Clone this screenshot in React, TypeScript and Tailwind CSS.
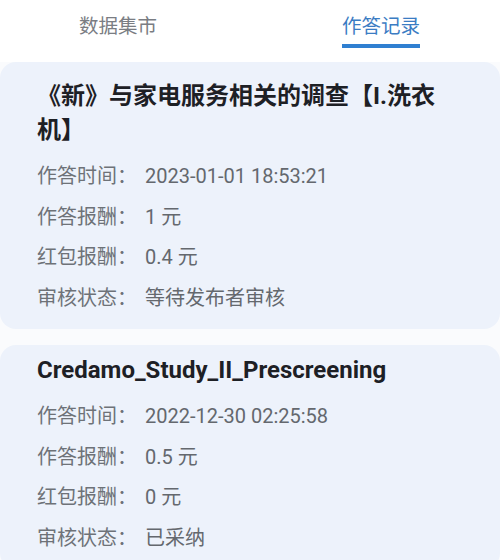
import React from 'react'

type Record = {
  title: string
  pad: string
  rows: [string, string][]
}

const records: Record[] = [
  {
    title: '《新》与家电服务相关的调查【I.洗衣机】',
    pad: 'pt-[17px]',
    rows: [
      ['作答时间：', '2023-01-01 18:53:21'],
      ['作答报酬：', '1 元'],
      ['红包报酬：', '0.4 元'],
      ['审核状态：', '等待发布者审核'],
    ],
  },
  {
    title: 'Credamo_Study_II_Prescreening',
    pad: 'pt-[8px]',
    rows: [
      ['作答时间：', '2022-12-30 02:25:58'],
      ['作答报酬：', '0.5 元'],
      ['红包报酬：', '0 元'],
      ['审核状态：', '已采纳'],
    ],
  },
]

const font = { fontFamily: 'Roboto, "Noto Sans CJK SC", sans-serif' }

const RecordCard = ({ record }: { record: Record }) => (
  <div className={`rounded-2xl bg-[#edf2fb] pl-[37px] pr-[40px] pb-[11px] ${record.pad}`}>
    <h2 className="text-[24px] font-bold leading-[34px] text-[#1d2025]">{record.title}</h2>
    <div className="mt-[9px] flex flex-col">
      {record.rows.map(([label, value]) => (
        <div key={label} className="flex h-[40.5px] items-center text-[20px] text-[#6e7278]">
          <span className="w-[108px] shrink-0">{label}</span>
          <span className="text-[#64686e]">{value}</span>
        </div>
      ))}
    </div>
  </div>
)

export default function App() {
  return (
    <div className="min-h-[560px] w-[500px] overflow-hidden bg-[#fafbfd]" style={font}>
      <div className="flex h-[62px] bg-white">
        <div className="pl-[79px] pt-[13px]">
          <span className="text-[19.5px] leading-[28px] text-[#7a7d83]">数据集市</span>
        </div>
        <div className="ml-auto mr-[80px] flex flex-col pt-[13px]">
          <span className="text-[19.5px] leading-[28px] text-[#3b7cc3]">作答记录</span>
          <span className="mt-[3px] h-[4px] w-full bg-[#2f7fd1]" />
        </div>
      </div>
      <div className="flex flex-col gap-[16px]">
        {records.map((r) => (
          <RecordCard key={r.title} record={r} />
        ))}
      </div>
    </div>
  )
}
